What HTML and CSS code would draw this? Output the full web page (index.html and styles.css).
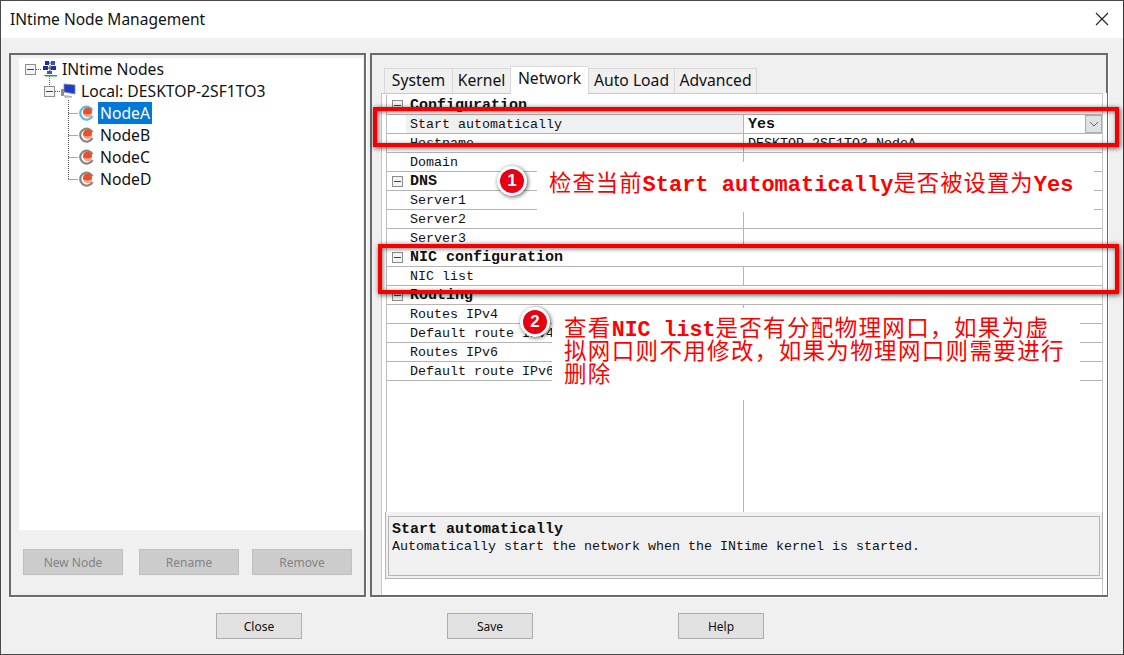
FILE: index.html
```html
<!DOCTYPE html>
<html lang="en">
<head>
  <meta charset="UTF-8">
  <title>INtime Node Management</title>
  <link rel="stylesheet" href="styles.css">
</head>
<body>

<svg class="icon-defs" width="0" height="0">
  <symbol id="ico-net" viewBox="0 0 16 16">
    <rect x="3" y="0" width="4" height="4" fill="#1c2fa8"/>
    <rect x="9" y="0" width="4" height="4" fill="#2a55c8"/>
    <rect x="1" y="5" width="5" height="4" fill="#1c2fa8"/>
    <rect x="9" y="5" width="5" height="4" fill="#1c2fa8"/>
    <path d="M7 2h2M6 7h3M8 4v8" stroke="#4a4a4a" stroke-width="1"/>
    <rect x="5" y="10" width="5" height="3" fill="#2b5fd0"/>
    <path d="M1 14h14v1.500H4z" fill="#27a13a"/>
  </symbol>
  <symbol id="ico-pc" viewBox="0 0 16 16">
    <path d="M4 1l11 1v9L4 9z" fill="#1d3fd0" stroke="#8a8a99" stroke-width=".8"/>
    <path d="M1 6h3v7H1z" fill="#8f8f8f"/>
    <path d="M3 12l9 1v1.800H5z" fill="#b5b5b5"/>
  </symbol>
  <symbol id="ico-node" viewBox="0 0 16 16">
    <path d="M13.500 5.200A6.500 6.500 0 1 0 13.500 11" fill="none" stroke="currentColor" stroke-width="2.200"/>
    <circle cx="8.500" cy="7" r="4.500" fill="#e8502c"/>
    <path d="M5 8.500a4 4 0 0 0 8 -.5c-2 1.500-5 2-8 .5z" fill="#f7a58c"/>
  </symbol>
</svg>

<div class="window">
  <header class="titlebar">
    <span>INtime Node Management</span>
    <svg class="close-x" width="14" height="14" viewBox="0 0 14 14"><path d="M1 1l12 12M13 1L1 13" stroke="#222" stroke-width="1.100"/></svg>
  </header>

  <div class="content">
    <section class="panel panel-left">
      <div class="tree">
        <svg class="tree-lines" width="70" height="140" viewBox="0 0 70 140">
          <path d="M17 11.500h6M30.500 18v9M36 33.500h5M49.500 42v79M49.500 55.500h10M49.500 77.500h10M49.500 99.500h10M49.500 121.500h10" fill="none" stroke="#555" stroke-dasharray="1 1"/>
        </svg>
        <div class="tree-row lvl0"><span class="exp"></span><svg class="ti" width="16" height="16"><use href="#ico-net"/></svg><span class="tree-label">INtime Nodes</span></div>
        <div class="tree-row lvl1"><span class="exp"></span><svg class="ti" width="16" height="16"><use href="#ico-pc"/></svg><span class="tree-label">Local: DESKTOP-2SF1TO3</span></div>
        <div class="tree-row lvl2 selected"><svg class="ti" width="16" height="16"><use href="#ico-node"/></svg><span class="tree-label">NodeA</span></div>
        <div class="tree-row lvl2"><svg class="ti" width="16" height="16"><use href="#ico-node"/></svg><span class="tree-label">NodeB</span></div>
        <div class="tree-row lvl2"><svg class="ti" width="16" height="16"><use href="#ico-node"/></svg><span class="tree-label">NodeC</span></div>
        <div class="tree-row lvl2"><svg class="ti" width="16" height="16"><use href="#ico-node"/></svg><span class="tree-label">NodeD</span></div>
      </div>
      <div class="tree-buttons">
        <button class="btn disabled">New Node</button>
        <button class="btn disabled">Rename</button>
        <button class="btn disabled">Remove</button>
      </div>
    </section>

    <section class="panel panel-right">
      <nav class="tabs">
        <div class="tab tab-system">System</div>
        <div class="tab tab-kernel">Kernel</div>
        <div class="tab tab-network active">Network</div>
        <div class="tab tab-autoload">Auto Load</div>
        <div class="tab tab-advanced">Advanced</div>
      </nav>
      <div class="tab-page">
        <div class="grid">
          <div class="row group"><span class="exp"></span><span class="name">Configuration</span></div>
          <div class="row current"><span class="name">Start automatically</span><span class="val strong">Yes<span class="drop"><svg width="10" height="6" viewBox="0 0 10 6"><path d="M1 1l4 4 4-4" fill="none" stroke="#666"/></svg></span></span></div>
          <div class="row"><span class="name">Hostname</span><span class="val">DESKTOP-2SF1TO3-NodeA</span></div>
          <div class="row"><span class="name">Domain</span><span class="val"></span></div>
          <div class="row group"><span class="exp"></span><span class="name">DNS</span></div>
          <div class="row"><span class="name">Server1</span><span class="val"></span></div>
          <div class="row"><span class="name">Server2</span><span class="val"></span></div>
          <div class="row"><span class="name">Server3</span><span class="val"></span></div>
          <div class="row group"><span class="exp"></span><span class="name">NIC configuration</span></div>
          <div class="row"><span class="name">NIC list</span><span class="val"></span></div>
          <div class="row group"><span class="exp"></span><span class="name">Routing</span></div>
          <div class="row"><span class="name">Routes IPv4</span><span class="val"></span></div>
          <div class="row"><span class="name">Default route IPv4</span><span class="val"></span></div>
          <div class="row"><span class="name">Routes IPv6</span><span class="val"></span></div>
          <div class="row"><span class="name">Default route IPv6</span><span class="val"></span></div>
          <div class="grid-rest"></div>
        </div>
        <div class="desc">
          <div class="desc-inner">
            <div class="desc-title">Start automatically</div>
            <div>Automatically start the network when the INtime kernel is started.</div>
          </div>
        </div>
      </div>
    </section>
  </div>

  <footer class="footer">
    <button class="btn">Close</button>
    <button class="btn">Save</button>
    <button class="btn">Help</button>
  </footer>

  <!-- annotations pasted over the screenshot -->
  <div class="red-box box-one"></div>
  <div class="red-box box-two"></div>

  <div class="note note-one"><span class="cjk">检查当前</span>Start automatically<span class="cjk">是否被设置为</span>Yes</div>
  <div class="note note-two"><span class="cjk">查看</span>NIC list<span class="cjk">是否有分配物理网口，如果为虚</span><br><span class="cjk">拟网口则不用修改，如果为物理网口则需要进行</span><br><span class="cjk">删除</span></div>

  <div class="badge badge-one">1</div>
  <div class="badge badge-two">2</div>
</div>

</body>
</html>
```

FILE: styles.css
```css
* {
  box-sizing: border-box;
}

html, body {
  margin: 0;
  height: 100%;
}

body {
  font-family: "Noto Sans", "Open Sans", sans-serif;
  color: #111;
  overflow: hidden;
}

.icon-defs {
  display: block;
  height: 0;
}

.window {
  position: relative;
  display: flex;
  flex-direction: column;
  width: 1124px;
  height: 655px;
  background: #f0f0f0;
  border: 1px solid #4a4a4a;
  border-right-color: #333;
}

.titlebar {
  display: flex;
  align-items: center;
  justify-content: space-between;
  height: 37px;
  padding: 0 14px 1px 9px;
  background: #fff;
  font-size: 15.5px;
}

.content {
  display: flex;
  gap: 3px;
  height: 559px;
  padding: 15px 0 0 8px;
}

.panel {
  height: 544px;
  border: 2px solid #6b6b6b;
  box-shadow: 1px 1px 0 #fff;
  background: #f0f0f0;
}

.panel-left {
  width: 357px;
  margin-right: 1px;
  padding: 3px 1px 0 8px;
}

.panel-right {
  display: flex;
  flex-direction: column;
  width: 738px;
  padding: 11px 0 0 9px;
}

/* tree */
.tree {
  position: relative;
  height: 472px;
  background: #fff;
}

.tree-lines {
  position: absolute;
  top: 0;
  left: 0;
}

.tree-row {
  position: relative;
  display: flex;
  align-items: center;
  height: 22px;
  font-size: 15.7px;
}

.lvl0 {
  padding-left: 6px;
}

.lvl1 {
  padding-left: 25px;
}

.lvl2 {
  padding-left: 60px;
}

.tree-row .exp {
  margin-right: 6px;
}

.lvl1 .exp {
  margin-right: 5px;
}

.ti {
  flex: none;
  color: #8a8480;
}

.lvl0 .tree-label {
  margin-left: 4px;
}

.lvl1 .tree-label {
  margin-left: 5px;
}

.lvl2 .tree-label {
  margin-left: 3px;
  padding: 0 2px;
  line-height: 22px;
}

.selected .ti {
  color: #59b9e6;
}

.selected .tree-label {
  background: #0078d7;
  color: #fff;
}

.exp {
  position: relative;
  flex: none;
  display: block;
  width: 11px;
  height: 11px;
  background: #f4f4f4;
  border: 1px solid #8c8c8c;
}

.exp::after {
  content: "";
  position: absolute;
  left: 1px;
  right: 1px;
  top: 4px;
  height: 1px;
  background: #2a3f9a;
}

.tree-buttons {
  display: grid;
  grid-template-columns: 116px 113px 100px;
  padding: 19px 0 0 4px;
}

.btn {
  width: 100px;
  height: 26px;
  padding: 0;
  font-family: "Noto Sans", sans-serif;
  font-size: 12px;
  color: #111;
  background: #e1e1e1;
  border: 1px solid #adadad;
}

.btn.disabled {
  color: #838383;
  background: #cccccc;
  border-color: #bfbfbf;
}

/* tabs */
.tabs {
  display: flex;
  align-items: flex-end;
  height: 27px;
  padding-left: 3px;
  font-size: 15.7px;
}

.tab {
  height: 25px;
  text-align: center;
  line-height: 23px;
  background: #f0f0f0;
  border: 1px solid #d9d9d9;
  border-bottom: 0;
  border-right: 0;
}

.tab-system {
  width: 68px;
}

.tab-kernel {
  width: 58px;
}

.tab-network {
  width: 78px;
}

.tab-autoload {
  width: 86px;
}

.tab-advanced {
  width: 83px;
  border-right: 1px solid #d9d9d9;
}

.tab.active {
  position: relative;
  height: 28px;
  margin-bottom: -1px;
  line-height: 23px;
  background: #fff;
}

.tab-page {
  display: flex;
  flex-direction: column;
  width: 722px;
  height: 502px;
  padding: 1px 0 0 4px;
  background: #fff;
  border: 1px solid #c8c8c8;
  border-bottom: 0;
  box-shadow: 4px 0 0 #fff;
}

/* property grid */
.grid {
  display: flex;
  flex-direction: column;
  height: 417px;
  padding-top: 1px;
  border-left: 1px solid #bdbdbd;
  font-family: "Liberation Mono", "DejaVu Sans Mono", monospace;
  font-size: 13.33px;
}

.row {
  display: grid;
  grid-template-columns: 19px 337px 1fr;
  flex: none;
  height: 19px;
  line-height: 20px;
  border-bottom: 1px solid #b4b4b4;
}

.row > .name:first-child {
  grid-column: 2;
}

.name {
  height: 18px;
  padding-left: 4px;
  white-space: nowrap;
}

.current .name {
  background: #f0f0f0;
}

.val {
  display: flex;
  justify-content: space-between;
  height: 18px;
  padding-left: 4px;
  border-left: 1px solid #b4b4b4;
  white-space: nowrap;
}

.strong,
.group .name,
.desc-title {
  font-size: 15px;
  font-weight: bold;
}

.group .exp {
  margin: 4px 0 0 5px;
}

.group .name {
  grid-column: 2 / 4;
}

.drop {
  display: flex;
  align-items: center;
  justify-content: center;
  width: 17px;
  height: 18px;
  background: #e1e1e1;
  border: 1px solid #adadad;
}

.grid-rest {
  flex: 1;
  margin-left: 356px;
  border-left: 1px solid #b4b4b4;
}

.desc {
  width: 718px;
  height: 67px;
  margin-left: -1px;
  padding: 4px 2px 2px;
  background: #f0f0f0;
  border: 1px solid #b4b4b4;
  border-top: 0;
}

.desc-inner {
  height: 60px;
  padding: 4px 3px 0;
  border: 1px solid #b4b4b4;
  font-family: "Liberation Mono", "DejaVu Sans Mono", monospace;
  font-size: 13.33px;
  line-height: 17px;
}

.footer {
  display: flex;
  gap: 145px;
  padding: 16px 0 0 215px;
}

.footer .btn {
  width: 86px;
}

/* annotations */
.red-box {
  position: absolute;
  border: 4px solid #f40000;
  box-shadow: 1px 1px 5px rgba(0, 0, 0, .7), inset 1px 1px 4px rgba(0, 0, 0, .55);
}

.box-one {
  left: 372px;
  top: 106px;
  width: 746px;
  height: 40px;
}

.box-two {
  left: 377px;
  top: 243px;
  width: 741px;
  height: 50px;
}

.note {
  position: absolute;
  padding-left: 12px;
  background: #fff;
  color: #f00;
  font-family: "Liberation Mono", monospace;
  font-weight: bold;
  font-size: 22px;
  line-height: 23px;
  white-space: nowrap;
}

.cjk {
  font-family: "Noto Sans CJK SC", sans-serif;
  font-weight: normal;
  line-height: 0;
}

.note-one {
  left: 536px;
  top: 161px;
  width: 557px;
  height: 50px;
  padding-top: 12px;
}

.note-one .cjk {
  font-size: 22.4px;
  letter-spacing: 1px;
}

.note-two {
  left: 551px;
  top: 307px;
  width: 528px;
  height: 92px;
  padding-top: 11px;
  font-size: 21.6px;
}

.note-two .cjk {
  font-size: 22.5px;
  letter-spacing: 1.35px;
}

.badge {
  position: absolute;
  width: 30px;
  height: 30px;
  text-align: center;
  line-height: 24px;
  color: #fff;
  font-family: "Liberation Sans", sans-serif;
  font-size: 17px;
  font-weight: bold;
  background: #e60012;
  border: 3px solid #fff;
  border-radius: 50%;
  box-shadow: 1px 1px 4px rgba(0, 0, 0, .65);
}

.badge-one {
  left: 496px;
  top: 165px;
}

.badge-two {
  left: 519px;
  top: 306px;
}
```
